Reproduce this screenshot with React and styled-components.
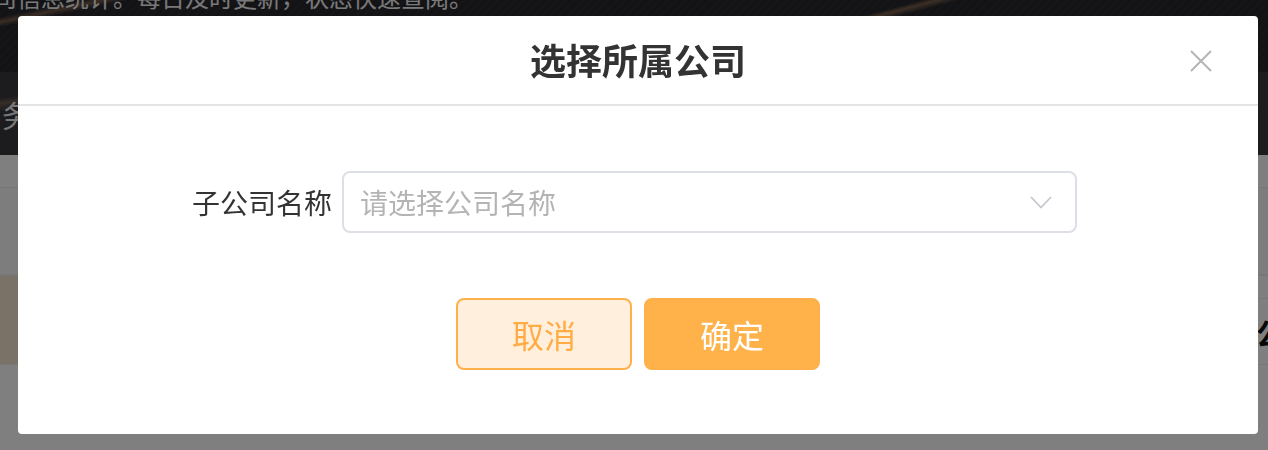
import React from "react";
import styled, { createGlobalStyle } from "styled-components";

const GlobalStyle = createGlobalStyle`
  html, body { margin: 0; padding: 0; }
  body {
    font-family: "Noto Sans CJK SC", "Noto Sans", sans-serif;
    background: #ffffff;
    overflow: hidden;
  }
  * { box-sizing: border-box; }
`;

/* ---------- background page ---------- */
const Page = styled.div`
  min-height: 450px;
  background: #ffffff;
  overflow: hidden;
`;

const Hero = styled.header`
  height: 72px;
  overflow: hidden;
  background:
    linear-gradient(165deg, transparent 60%, rgba(190, 140, 100, 0.55) 61%, transparent 62.5%),
    linear-gradient(168deg, transparent 5%, rgba(190, 140, 100, 0.5) 6.5%, transparent 8%),
    repeating-linear-gradient(135deg, #26262c 0 3px, #2a2a30 3px 6px);
`;

const HeroText = styled.p`
  margin: -21px 0 0 -31px;
  font-size: 24px;
  line-height: 36px;
  color: #f2f2f2;
  white-space: nowrap;
`;

const SubBand = styled.div`
  height: 83px;
  display: flex;
  align-items: center;
  padding-left: 2px;
  background:
    linear-gradient(172deg, transparent 10%, rgba(190, 140, 100, 0.4) 12%, transparent 15%),
    #38383e;
  font-size: 30px;
  color: #f0f0f0;
`;

const Row = styled.div`
  height: ${(p) => p.$h}px;
  background: ${(p) => p.$bg || "#ffffff"};
  border-bottom: ${(p) => (p.$line ? `${p.$line}px solid #efefef` : "none")};
`;

const SplitRow = styled.div`
  height: 89px;
  display: grid;
  grid-template-columns: 640px 1fr;
  border-bottom: 1px solid #efefef;
`;

const Banner = styled.div`
  background: #f4e5cf;
`;

const SideCell = styled.div`
  margin-top: 22px;
  border-top: 1px solid #efefef;
  display: flex;
  align-items: center;
  justify-content: flex-end;
  font-size: 30px;
  font-weight: 700;
  color: #111;
  margin-right: -18px;
`;

/* ---------- modal ---------- */
const Overlay = styled.div`
  position: fixed;
  inset: 0;
  background: rgba(0, 0, 0, 0.5);
  padding: 16px 10px 0 18px;
`;

const Dialog = styled.div`
  width: 1240px;
  background: #ffffff;
  border-radius: 4px;
  overflow: hidden;
`;

const Header = styled.div`
  height: 90px;
  display: flex;
  align-items: center;
  justify-content: center;
  border-bottom: 2px solid #e4e4e4;
  position: relative;
`;

const Title = styled.h2`
  margin: 0;
  font-size: 36px;
  font-weight: 700;
  color: #333333;
  line-height: 1;
  padding-bottom: 2px;
`;

const CloseButton = styled.button`
  position: absolute;
  right: 44px;
  top: 32px;
  width: 26px;
  height: 26px;
  padding: 0;
  border: none;
  background: transparent;
  display: flex;
  align-items: center;
  justify-content: center;
  cursor: pointer;
`;

const Body = styled.div`
  padding: 65px 0 64px;
`;

const FormRow = styled.div`
  display: flex;
  align-items: center;
  gap: 10px;
  padding-left: 174px;
`;

const Label = styled.label`
  font-size: 28px;
  color: #333333;
  line-height: 1;
  white-space: nowrap;
`;

const SelectBox = styled.div`
  width: 735px;
  height: 62px;
  border: 2px solid #dcdfe6;
  border-radius: 8px;
  display: flex;
  align-items: center;
  justify-content: space-between;
  padding: 0 23px 0 16px;
  cursor: pointer;
`;

const Placeholder = styled.span`
  font-size: 28px;
  color: #b4b4b4;
  line-height: 1;
`;

const Actions = styled.div`
  display: flex;
  justify-content: center;
  gap: 12px;
  margin-top: 65px;
`;

const Button = styled.button`
  width: 176px;
  height: 72px;
  border-radius: 8px;
  border: 2px solid #ffb04a;
  background: ${(p) => (p.$primary ? "#ffb14a" : "#ffefdc")};
  color: ${(p) => (p.$primary ? "#ffffff" : "#ffac45")};
  font-family: inherit;
  font-size: 32px;
  line-height: 1;
  cursor: pointer;
  padding: 0;
`;

export default function App() {
  return (
    <>
      <GlobalStyle />
      <Page>
        <Hero>
          <HeroText>公司信息统计。每日及时更新，状态快速查阅。</HeroText>
        </Hero>
        <SubBand>务数据概览</SubBand>
        <Row $h={33} $line={1} />
        <Row $h={88} $bg="#fafafa" $line={2} />
        <SplitRow>
          <Banner />
          <SideCell>公</SideCell>
        </SplitRow>
        <Row $h={90} />
      </Page>

      <Overlay>
        <Dialog role="dialog" aria-label="选择所属公司">
          <Header>
            <Title>选择所属公司</Title>
            <CloseButton aria-label="关闭">
              <svg width="22" height="22" viewBox="0 0 22 22">
                <path d="M1 1 L21 21 M21 1 L1 21" stroke="#b5b5b5" strokeWidth="2" fill="none" />
              </svg>
            </CloseButton>
          </Header>
          <Body>
            <FormRow>
              <Label>子公司名称</Label>
              <SelectBox>
                <Placeholder>请选择公司名称</Placeholder>
                <svg width="22" height="13" viewBox="0 0 22 13">
                  <path d="M1 1 L11 11.5 L21 1" stroke="#c4c7cd" strokeWidth="1.8" fill="none" />
                </svg>
              </SelectBox>
            </FormRow>
            <Actions>
              <Button>取消</Button>
              <Button $primary>确定</Button>
            </Actions>
          </Body>
        </Dialog>
      </Overlay>
    </>
  );
}
